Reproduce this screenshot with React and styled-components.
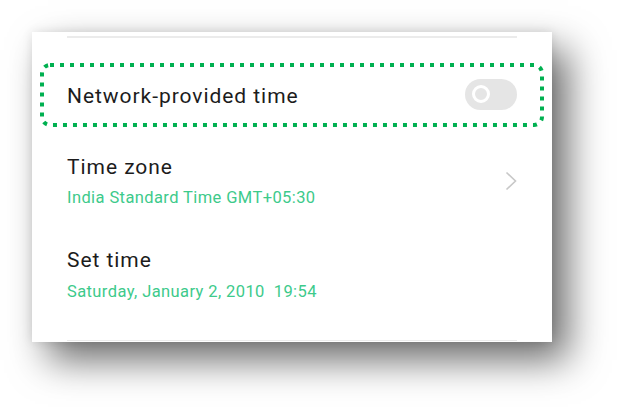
import React from 'react';
import styled, { createGlobalStyle } from 'styled-components';

const GlobalStyle = createGlobalStyle`
  html, body {
    margin: 0;
    padding: 0;
    background: #ffffff;
  }
  body {
    font-family: Roboto, "Noto Sans", "Liberation Sans", sans-serif;
  }
`;

const Page = styled.div`
  width: 617px;
  height: 407px;
  padding: 32px 0 0 32px;
  box-sizing: border-box;
`;

const Card = styled.div`
  width: 520px;
  height: 310px;
  box-sizing: border-box;
  padding: 0 35px;
  background: #ffffff;
  display: flex;
  flex-direction: column;
  box-shadow: 16px 18px 36px rgba(0, 0, 0, 0.58), 0 0 10px rgba(0, 0, 0, 0.1);
`;

const Divider = styled.div`
  height: 1.5px;
  background: #ebebeb;
  margin-top: ${(p) => p.$top}px;
  flex-shrink: 0;
`;

const SwitchRow = styled.div`
  position: relative;
  height: 64px;
  margin: 25px 0 8px;
  display: flex;
  align-items: center;
  justify-content: space-between;
`;

const ListRow = styled.div`
  padding: 20px 0;
  display: flex;
  align-items: center;
  justify-content: space-between;
`;

const Title = styled.div`
  font-size: 21px;
  line-height: 24px;
  letter-spacing: 0.95px;
  color: #1c1c1c;
  padding-top: ${(p) => p.$nudge || 0}px;
`;

const Sub = styled.div`
  font-size: 16.5px;
  line-height: 20px;
  letter-spacing: 0.4px;
  color: #3dca8b;
  margin-top: 9.5px;
  white-space: pre;
`;

const Toggle = styled.div`
  width: 52px;
  height: 31px;
  border-radius: 16px;
  background: #e5e5e5;
  display: flex;
  align-items: center;
  padding-left: 7px;
  box-sizing: border-box;
  margin-top: -1px;
`;

const Knob = styled.div`
  width: 18px;
  height: 18px;
  border-radius: 50%;
  border: 3.5px solid #ffffff;
  box-sizing: border-box;
`;

const Highlight = styled.svg`
  position: absolute;
  left: -27px;
  top: 0;
  pointer-events: none;
`;

const Chevron = () => (
  <svg width="12" height="20" viewBox="0 0 12 20">
    <polyline
      points="1.5,1.5 10.5,10 1.5,18.5"
      fill="none"
      stroke="#c8c8c8"
      strokeWidth="1.6"
    />
  </svg>
);

const rows = [
  { title: 'Time zone', value: 'India Standard Time GMT+05:30', arrow: true },
  { title: 'Set time', value: 'Saturday, January 2, 2010  19:54', arrow: false },
];

const App = () => (
  <Page>
    <GlobalStyle />
    <Card>
      <Divider $top={4} />
      <SwitchRow>
        <Title $nudge={3}>Network-provided time</Title>
        <Toggle>
          <Knob />
        </Toggle>
        <Highlight width="504" height="64" viewBox="0 0 504 64">
          <rect
            x="2"
            y="2"
            width="500"
            height="60"
            rx="8"
            fill="none"
            stroke="#00b050"
            strokeWidth="4"
            strokeDasharray="4 6"
          />
        </Highlight>
      </SwitchRow>
      {rows.map((row) => (
        <ListRow key={row.title}>
          <div>
            <Title>{row.title}</Title>
            <Sub>{row.value}</Sub>
          </div>
          {row.arrow && <Chevron />}
        </ListRow>
      ))}
      <Divider $top={18} />
    </Card>
  </Page>
);

export default App;
